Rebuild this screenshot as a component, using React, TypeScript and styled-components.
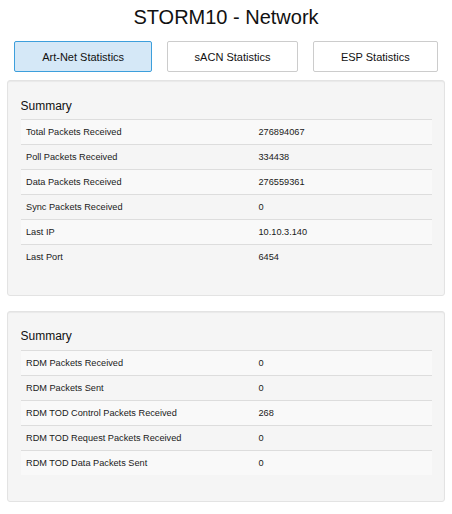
import styled, { createGlobalStyle } from 'styled-components';

const GlobalStyle = createGlobalStyle`
  body {
    margin: 0;
    background: #ffffff;
    font-family: "Liberation Sans", Arial, sans-serif;
    color: #222;
  }
`;

const tabs = ['Art-Net Statistics', 'sACN Statistics', 'ESP Statistics'];

const artnet = [
  ['Total Packets Received', '276894067'],
  ['Poll Packets Received', '334438'],
  ['Data Packets Received', '276559361'],
  ['Sync Packets Received', '0'],
  ['Last IP', '10.10.3.140'],
  ['Last Port', '6454'],
];

const rdm = [
  ['RDM Packets Received', '0'],
  ['RDM Packets Sent', '0'],
  ['RDM TOD Control Packets Received', '268'],
  ['RDM TOD Request Packets Received', '0'],
  ['RDM TOD Data Packets Sent', '0'],
];

export default function App() {
  return (
    <>
      <GlobalStyle />
      <Page>
        <Title>STORM10 - Network</Title>
        <TabBar>
          {tabs.map((t, i) => (
            <TabButton key={t} $active={i === 0}>{t}</TabButton>
          ))}
        </TabBar>
        <Well>
          <Heading>Summary</Heading>
          <StatTable>
            {artnet.map(([label, value], i) => (
              <Row key={label} $odd={i % 2 === 0}>
                <Cell>{label}</Cell>
                <Cell>{value}</Cell>
              </Row>
            ))}
          </StatTable>
        </Well>
        <Well>
          <Heading>Summary</Heading>
          <StatTable>
            {rdm.map(([label, value], i) => (
              <Row key={label} $odd={i % 2 === 0}>
                <Cell>{label}</Cell>
                <Cell>{value}</Cell>
              </Row>
            ))}
          </StatTable>
        </Well>
      </Page>
    </>
  );
}

const Page = styled.div`
  padding: 6px 7px 0;
  display: flex;
  flex-direction: column;
`;

const Title = styled.h2`
  margin: 0;
  font-size: 20px;
  line-height: 22px;
  font-weight: normal;
  text-align: center;
  color: #111;
`;

const TabBar = styled.div`
  display: flex;
  justify-content: center;
  gap: 14.5px;
  margin-top: 13px;
`;

const TabButton = styled.button<{ $active?: boolean }>`
  height: 31px;
  padding: 0 27px;
  font-family: "Liberation Sans", Arial, sans-serif;
  font-size: 11px;
  color: #111;
  background: ${({ $active }) => ($active ? '#d5e8f7' : '#ffffff')};
  border: 1px solid ${({ $active }) => ($active ? '#3d9fdc' : '#cccccc')};
  border-radius: 2px;
  cursor: pointer;
`;

const Well = styled.div`
  margin-top: 8px;
  margin-bottom: 7px;
  padding: 0 12.5px 13px;
  background: #f5f5f5;
  border: 1px solid #e3e3e3;
  border-radius: 3px;
  box-shadow: inset 0 1px 1px rgba(0, 0, 0, 0.05);
`;

const Heading = styled.h4`
  margin: 18.5px 0 6.6px;
  font-size: 12px;
  line-height: 13.2px;
  font-weight: normal;
  color: #111;
`;

const StatTable = styled.div`
  display: flex;
  flex-direction: column;
  margin-bottom: 12.5px;
`;

const Row = styled.div<{ $odd?: boolean }>`
  display: grid;
  grid-template-columns: 232.5px 1fr;
  height: 25px;
  box-sizing: border-box;
  border-top: 1px solid #dddddd;
  background: ${({ $odd }) => ($odd ? '#f9f9f9' : 'transparent')};
`;

const Cell = styled.div`
  padding: 0 5.5px;
  display: flex;
  align-items: center;
  font-size: 9.2px;
  color: #1a1a1a;
`;
